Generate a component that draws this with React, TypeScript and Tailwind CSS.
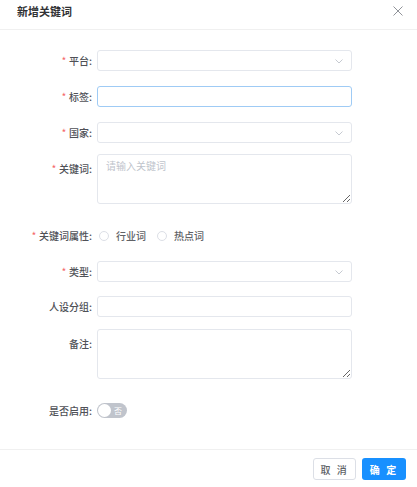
import React from "react";

const font = { fontFamily: '"Noto Sans CJK SC", "Noto Sans CJK JP", sans-serif' };

function Label({ text, required, top }: { text: string; required?: boolean; top?: boolean }) {
  return (
    <div
      className={
        top
          ? "mt-[4px] flex h-[21px] w-[97px] shrink-0 items-center justify-end pr-[5px] text-[10px] font-medium text-[#4f5157] whitespace-nowrap"
          : "flex h-[21px] w-[97px] shrink-0 items-center justify-end pr-[5px] text-[10px] font-medium text-[#4f5157] whitespace-nowrap"
      }
    >
      {required && <span className="mr-[3px] text-[9px] leading-[9px] text-[#f56c6c]">*</span>}
      <span className="leading-[12px]">{text}:</span>
    </div>
  );
}

function Chevron() {
  return (
    <svg width="8" height="5" viewBox="0 0 8 5" className="absolute right-[8px] top-[8px]">
      <path d="M0.5 0.5 L4 4 L7.5 0.5" fill="none" stroke="#c0c4cc" strokeWidth="0.9" />
    </svg>
  );
}

function Select() {
  return (
    <div className="relative h-[21px] w-[255px] rounded-[3px] border border-solid border-[#e4e7ed] bg-white">
      <Chevron />
    </div>
  );
}

function FocusedInput() {
  return <div className="h-[21px] w-[255px] rounded-[3px] border border-solid border-[#9fcbf5] bg-white" />;
}

function Input() {
  return <div className="h-[21px] w-[255px] rounded-[3px] border border-solid border-[#e4e7ed] bg-white" />;
}

function TextArea({ placeholder }: { placeholder?: string }) {
  return (
    <textarea
      readOnly
      placeholder={placeholder}
      className="block h-[50px] w-[255px] resize-y rounded-[3px] border border-solid border-[#e4e7ed] bg-white px-[8px] py-[4px] text-[10px] leading-[14px] text-[#606266] outline-none placeholder:text-[#c0c4cc]"
    />
  );
}

function Radio({ text }: { text: string }) {
  return (
    <div className="flex items-center">
      <span className="block h-[10px] w-[10px] rounded-full border border-solid border-[#dcdfe6] bg-white" />
      <span className="ml-[7px] text-[10px] font-medium text-[#606266]">{text}</span>
    </div>
  );
}

export default function App() {
  return (
    <div className="relative flex h-[487px] w-[417px] flex-col bg-white" style={font}>
      {/* header */}
      <div className="flex h-[30px] shrink-0 items-start justify-between border-b border-solid border-[#f0f0f0] pl-[17px] pr-[14px] pt-[3px]">
        <div className="text-[11px] font-bold leading-[16px] text-[#303133]">新增关键词</div>
        <svg width="10" height="10" viewBox="0 0 10 10" className="mt-[3px]">
          <path d="M0.5 0.5 L9.5 9.5 M9.5 0.5 L0.5 9.5" stroke="#909399" strokeWidth="1" fill="none" />
        </svg>
      </div>

      {/* body */}
      <div className="flex flex-1 flex-col">
        <div className="mt-[20px] flex">
          <Label text="平台" required />
          <Select />
        </div>
        <div className="mt-[15px] flex">
          <Label text="标签" required />
          <FocusedInput />
        </div>
        <div className="mt-[15px] flex">
          <Label text="国家" required />
          <Select />
        </div>
        <div className="mt-[11px] flex items-start">
          <Label text="关键词" required top />
          <TextArea placeholder="请输入关键词" />
        </div>
        <div className="mt-[21px] flex h-[21px] items-center">
          <Label text="关键词属性" required />
          <div className="ml-[2px] flex items-center gap-[11px]">
            <Radio text="行业词" />
            <Radio text="热点词" />
          </div>
        </div>
        <div className="mt-[15px] flex">
          <Label text="类型" required />
          <Select />
        </div>
        <div className="mt-[14px] flex">
          <Label text="人设分组" />
          <Input />
        </div>
        <div className="mt-[12px] flex items-start">
          <Label text="备注" top />
          <TextArea />
        </div>
        <div className="mt-[21px] flex h-[21px] items-center">
          <Label text="是否启用" />
          <div className="relative h-[15px] w-[30px] rounded-full bg-[#c0c4cc]">
            <span className="absolute left-[1px] top-[1px] h-[13px] w-[13px] rounded-full bg-white" />
            <span className="absolute right-[5px] top-0 text-[8px] leading-[15px] text-white">否</span>
          </div>
        </div>
      </div>

      {/* footer */}
      <div className="flex h-[38px] shrink-0 items-start justify-end gap-[6px] border-t border-solid border-[#f0f0f0] pr-[11px] pt-[8px]">
        <button className="h-[22px] w-[43px] rounded-[3px] border border-solid border-[#dcdfe6] bg-white text-[10px] font-medium tracking-[2px] text-[#606266]">
          取 消
        </button>
        <button className="h-[22px] w-[44px] rounded-[3px] bg-[#1890ff] text-[10px] font-bold tracking-[2px] text-white">
          确 定
        </button>
      </div>
    </div>
  );
}
